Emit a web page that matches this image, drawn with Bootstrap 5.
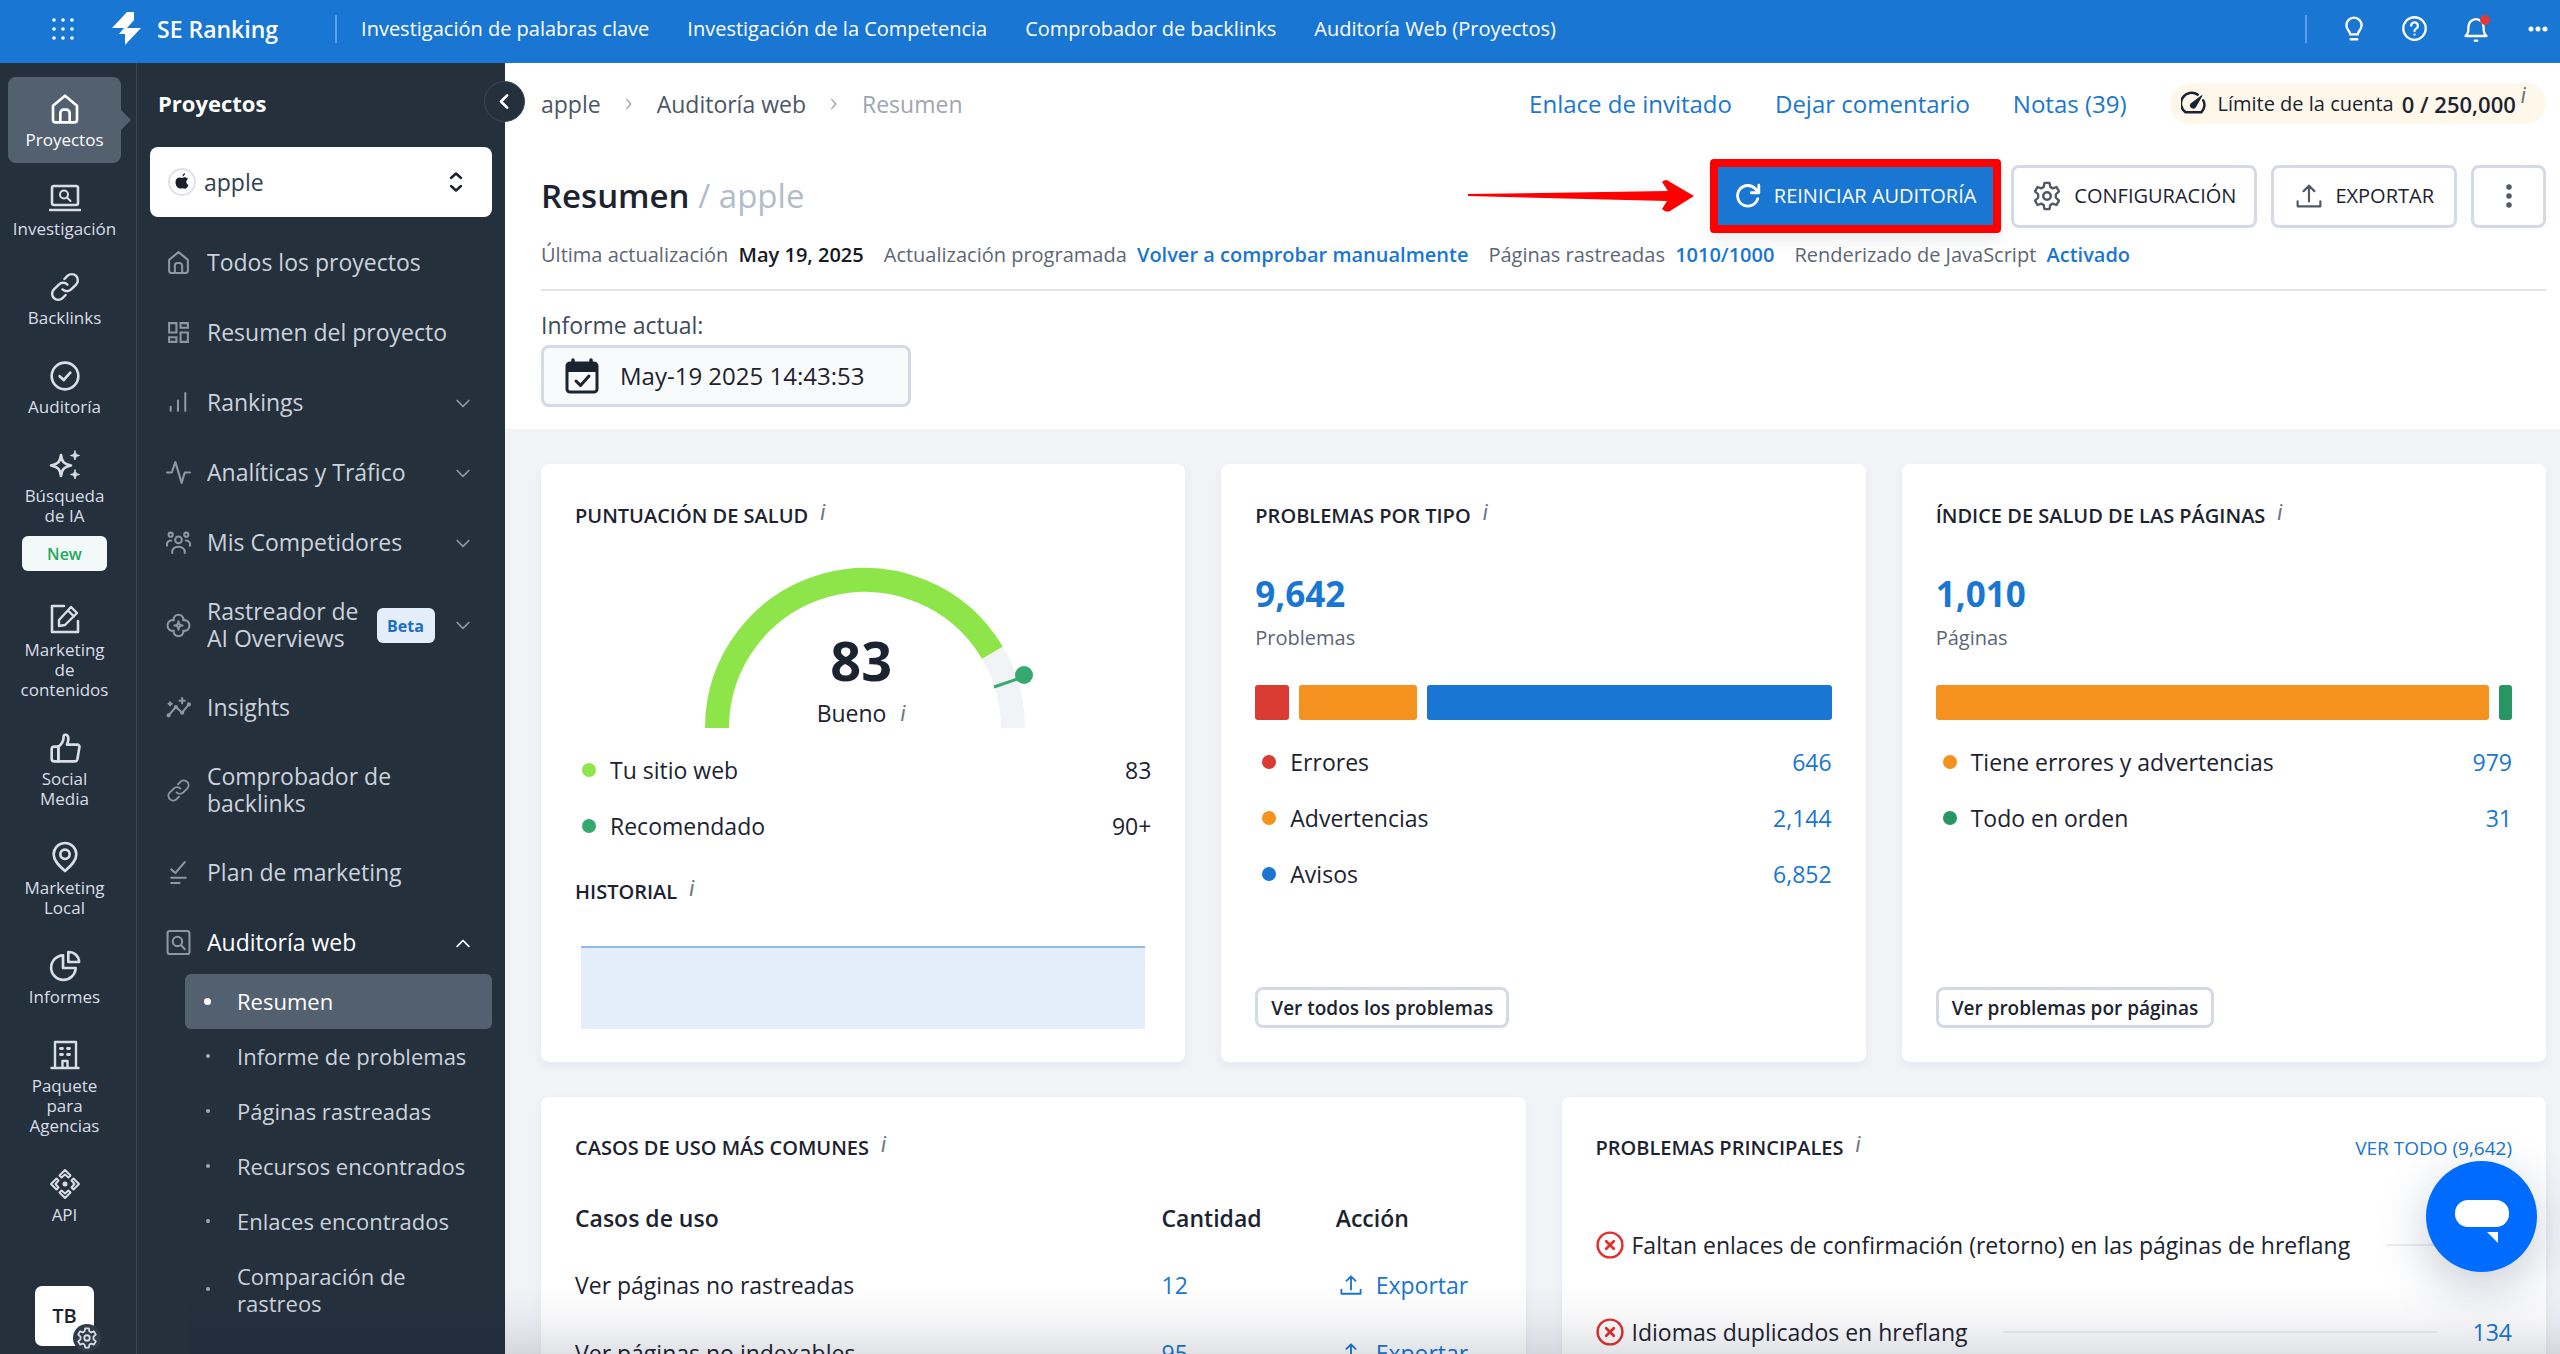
<!DOCTYPE html>
<html lang="es">
<head>
<meta charset="utf-8">
<meta name="viewport" content="width=device-width, initial-scale=1">
<title>SE Ranking – Resumen</title>
<link href="https://cdn.jsdelivr.net/npm/bootstrap@5.3.0/dist/css/bootstrap.min.css" rel="stylesheet">
<style>
:root{--blue:#1976d2;--dark:#24303c;--line:#d5d9e5;--ink:#1c2330;--grey:#5d6675}
body{font-family:"Open Sans","Noto Sans",sans-serif;font-size:23px;line-height:28px;color:var(--ink);background:#f2f3f7;height:100vh;overflow:hidden}
a{text-decoration:none;color:var(--blue)}
svg{display:block;flex:none;fill:none;stroke:currentColor;stroke-width:2;stroke-linecap:round;stroke-linejoin:round}
.topbar{height:63px;background:var(--blue);color:#fff;font-size:20px;padding-bottom:6px}
.topbar a{color:#fff}
.top-links{gap:38px}
.top-tools{gap:34px;margin-right:12px}
.apps-cell{width:112px;padding-left:14px}
.brand-name{font-size:23px;font-weight:600}
.v-sep{width:2px;height:28px;background:#5a9fe3}
.brand-sep{margin:0 24px 0 57px}
.bell-dot{right:0;top:0;width:10px;height:10px;background:#e53935;border-radius:50%}
.shell{height:calc(100vh - 63px);overflow:hidden}
.rail{width:137px;background:var(--dark);border-right:1px solid #3d4753;padding:14px 15px 0 8px}
.rail-item{color:#d9dee6;font-size:17px;font-weight:500;line-height:20px;text-align:center;padding:16px 0 13px;margin-bottom:3px;border-radius:8px}
.rail-item svg{margin:0 auto 5px}
.rail-item span{display:block;margin:0 -8px;white-space:nowrap}
.rail-item.current{background:#53606f;color:#fff}
.rail-item.current::after{content:"";position:absolute;left:100%;top:50%;margin-top:-10px;border:10px solid transparent;border-left-color:#53606f;border-right:0}
.new-tag{background:#f3f9f8;color:#1fa95c;border-radius:6px;height:35px;line-height:36px;margin:10px 14px 0;font-size:16px;font-weight:600}
.user-tile{width:59px;height:60px;background:#fff;color:var(--ink);border-radius:7px;font-size:20px;font-weight:600;line-height:60px;margin:48px 0 0 27px}
.user-gear{left:38px;top:38px;width:28px;height:28px;border-radius:50%;background:#303c49;color:#d9dee6;padding:3px}
.side{width:368px;background:var(--dark);color:#ccd2db;padding:26px 13px 0 13px}
.side-title{font-size:22px;font-weight:700;color:#fff;padding-left:8px;margin-bottom:30px}
.side-collapse{right:-20px;top:18px;width:41px;height:41px;border-radius:50%;background:var(--dark);border:1px solid #3d4753;color:#fff;z-index:3;padding:9px}
.project-select{height:70px;border:0;border-radius:8px;font-size:23px;font-weight:500;color:#333f50;padding:0 60px 0 54px;background-image:none}
.project-logo{left:18px;top:21px}
.project-arrows{right:26px;top:23px;color:#1c2330}
.menu{padding-top:11px}
.menu-item{min-height:70px;padding:20px 19px 21px 16px;line-height:27px;color:#ccd2db}
.menu-item>svg{color:#8d96a2}
.menu-item.open{color:#fff;min-height:66px;padding-bottom:17px}
.menu-item.open>svg:last-child{color:#fff}
.beta-tag{background:#e4eefb;color:#1b6ec4;border-radius:6px;width:58px;height:35px;line-height:36px;font-size:16px;font-weight:700;text-align:center;flex:none;margin-left:18px}
.sub-item{min-height:55px;margin-left:35px;padding:14px 0 14px 52px;font-size:22px;line-height:27px;color:#ccd2db;border-radius:6px;position:relative}
.sub-item::before{content:"";position:absolute;left:21px;top:50%;width:4px;height:4px;margin-top:-3px;border-radius:50%;background:#a3abb6}
.sub-item.current{background:#53606f;color:#fff}
.sub-item.current::before{left:19px;width:7px;height:7px;margin-top:-4px;background:#fff}
.head{background:#fff;padding:20px 14px 21px 36px;height:366px}
.crumbs{color:#4b5667;gap:21px}
.crumbs a{color:#4b5667}
.crumbs svg{color:#969eaa}
.crumbs span{color:#a0a5ae}
.head-links{gap:43px;font-size:24px}
.limit-pill{background:#fff8ea;border-radius:21px;height:41px;font-size:20px;padding:0 20px 0 11px}
.limit-pill b{font-size:22px;font-weight:600}
.info{font:italic 22px/20px "Roboto",sans-serif;color:#6d7685;align-self:flex-start}
.limit-pill .info{margin:3px 0 0 5px}
.panel-title .info{margin:4px 0 0 12px}
.page-title{font-size:33px;line-height:44px;font-weight:600;margin:0}
.page-title span{font-weight:400;color:#b3bcc8}
.act{border:3px solid var(--line);border-radius:8px;background:#fff;height:63px;font-size:20px;font-weight:500;color:var(--ink);display:flex;align-items:center;gap:12px;padding:0 18px;white-space:nowrap}
.act svg{color:#505967}
.act-main{background:var(--blue);border:8px solid #f00;color:#fff;border-radius:4px;height:74px;box-shadow:0 8px 14px rgba(30,40,60,.08);padding:0 17px;gap:13px}
.act-main svg{color:#fff}
.act-export{padding:0 20px 0 22px;gap:13px}
.act-more{width:75px}
.act-group{gap:14px;margin-left:10px}
.meta{font-size:20px;color:var(--grey);white-space:nowrap;gap:20px;margin-top:8px}
.meta b{font-weight:600;margin-left:5px}
.meta .when{color:#151a24}
.head-rule{height:2px;background:#dfe2e9;margin:20px 0 20px}
.date-label{color:#3f4a5a;margin-bottom:6px}
.date-btn{border:3px solid var(--line);border-radius:8px;background:#f9fafb;height:62px;width:370px;font-weight:500;font-size:24px;color:var(--ink);padding:0 0 0 20px;gap:20px;text-align:left}
.board{padding:35px 14px 0 36px;gap:36px}
.panel{background:#fff;border-radius:8px;box-shadow:0 4px 10px rgba(30,40,70,.05);padding:34px;flex:1 1 0;min-width:0}
.panel-top{height:598px;padding-top:35px}
.panel-title{font-size:20px;font-weight:600;line-height:34px;margin:0}
.dot{width:14px;height:14px;border-radius:50%;flex:none}
.legend{height:56px;padding-left:7px;gap:14px}
.big-num{font-size:35px;font-weight:700;line-height:44px;color:var(--blue);margin-top:39px}
.unit{font-size:20px;color:var(--grey);margin-top:8px}
.seg-bar{gap:10px;margin:33px 0 14px}
.seg{height:35px;border-radius:3px;flex-basis:0}
.small-btn{border:3px solid var(--line);border-radius:8px;background:#fff;height:41px;font-size:19px;font-weight:600;color:var(--ink);padding:0 13px;line-height:34px;align-self:flex-start}
.red{background:#d93a32}.orange{background:#f5911f}.bluebg{background:var(--blue)}.green{background:#289565}.lime{background:#8de549}.teal{background:#35a970}
.gauge{width:340px;height:160px;margin:35px auto 14px;overflow:visible}
.gauge svg{overflow:visible;margin-left:12px}
.gauge-text{left:11px;top:64px;width:314px}
.gauge-num{font-size:54px;line-height:56px;font-weight:700}
.gauge-word{margin-top:11px}
.gauge-word .info{margin:5px 0 0 14px}
.hist-title{margin-top:21px}
.history{height:83px;margin:37px 6px 0;background:#e4eefa;border-top:2px solid #91bbea}
.uses{margin-top:20px}
.uses td,.uses th{padding:0;height:66px;border:0;vertical-align:middle}
.uses td{height:68px}
.uses th{font-weight:600}
.uses td svg{margin:0 14px 0 4px}
.rule{height:2px;background:#eceef2;flex:1;margin:0 36px}
.issues{margin-top:36px}
.issue{height:87px}
.issue svg{color:#e0302c}
.see-all{font-size:19px;font-weight:500}
.chat{right:23px;bottom:82px;width:111px;height:111px;border-radius:50%;background:#006bff;border:0;z-index:10;box-shadow:0 16px 50px rgba(30,50,90,.25);padding:0}
.fade-edge{left:190px;right:0;bottom:0;height:70px;background:linear-gradient(rgba(25,32,60,0),rgba(25,32,60,.04) 50%,rgba(25,32,60,.13));z-index:5;pointer-events:none}
.arrow-note{width:226px;height:32px;margin-right:16px}
</style>
<script src="https://cdn.jsdelivr.net/npm/bootstrap@5.3.0/dist/js/bootstrap.bundle.min.js"></script>
</head>
<body>
<svg width="0" height="0" class="position-absolute">
<defs>
<symbol id="home" viewBox="0 0 24 24"><path d="M3 9.500 12 2l9 7.500V20a2 2 0 0 1-2 2H5a2 2 0 0 1-2-2zM8.500 22v-7a2.500 2.500 0 0 1 2.500-2.500h2a2.500 2.500 0 0 1 2.500 2.500v7"/></symbol>
<symbol id="link" viewBox="0 0 24 24"><path d="M10 14a5 5 0 0 0 7 0l4-4a4.800 4.800 0 0 0-7-7l-2.500 2.500M14 10a5 5 0 0 0-7 0l-4 4a4.800 4.800 0 0 0 7 7l2.500-2.500"/></symbol>
<symbol id="down" viewBox="0 0 24 24"><path d="m5 9 7 7 7-7"/></symbol>
<symbol id="up" viewBox="0 0 24 24"><path d="m5 16 7-7 7 7"/></symbol>
<symbol id="right" viewBox="0 0 24 24"><path d="m8 4 7 8-7 8"/></symbol>
<symbol id="gear" viewBox="0 0 24 24"><circle cx="12" cy="12" r="3"/><path d="M10 1.500h4l.6 3.200 2 1.200 3-1.100 2 3.500-2.500 2.300v2.800l2.500 2.300-2 3.500-3-1.100-2 1.200-.6 3.200h-4l-.6-3.200-2-1.200-3 1.100-2-3.500 2.500-2.300v-2.800L2.400 8.300l2-3.500 3 1.100 2-1.200z" stroke-width="1.900"/></symbol>
<symbol id="export" viewBox="0 0 24 24"><path d="M12 17V3M7 7.500 12 2.500l5 5M1.500 17v4.500h21V17"/></symbol>
<symbol id="bad" viewBox="0 0 26 26"><circle cx="13" cy="13" r="11.500" stroke-width="2.300"/><path d="m9.500 9.500 7 7m0-7-7 7" stroke-width="2.600"/></symbol>
</defs>
</svg>

<header class="topbar d-flex align-items-center">
  <div class="apps-cell d-flex justify-content-center flex-shrink-0">
    <svg width="22" height="22" viewBox="0 0 22 22"><path d="M2 2h.01M11 2h.01M20 2h.01M2 11h.01M11 11h.01M20 11h.01M2 20h.01M11 20h.01M20 20h.01" stroke-width="3.600"/></svg>
  </div>
  <svg width="29" height="33" viewBox="0 0 29 33"><path fill="#fff" stroke="none" d="M15 0h7v8l-7 8h14L13 33v-11H7l5-6H0z"/></svg>
  <a href="#" class="brand-name ms-3">SE Ranking</a>
  <div class="v-sep brand-sep"></div>
  <nav class="top-links d-flex">
    <a href="#">Investigación de palabras clave</a><a href="#">Investigación de la Competencia</a><a href="#">Comprobador de backlinks</a><a href="#">Auditoría Web (Proyectos)</a>
  </nav>
  <div class="top-tools d-flex align-items-center ms-auto">
    <div class="v-sep"></div>
    <svg width="26" height="26" viewBox="0 0 24 24" class="ms-n2"><path d="M8.500 17c0-3-3.500-4-3.500-8.500a7 7 0 0 1 14 0C19 13 15.500 14 15.500 17zM9 21.500h6" stroke-width="2.200"/></svg>
    <svg width="27" height="27" viewBox="0 0 24 24"><circle cx="12" cy="12" r="10"/><path d="M9 9.500a3 3 0 1 1 4.500 2.600c-1 .6-1.500 1.200-1.500 2.200M12 17.400h.01"/></svg>
    <div class="position-relative"><svg width="28" height="28" viewBox="0 0 24 24"><path d="M3 18h18c-2.500-2.500-2.500-4-2.500-8a6.500 6.500 0 0 0-13 0c0 4 0 5.500-2.500 8zM11 22h2"/></svg><span class="bell-dot position-absolute"></span></div>
    <svg width="20" height="6" viewBox="0 0 20 6" class="ms-1"><path d="M3 3h.01M10 3h.01M17 3h.01" stroke-width="5"/></svg>
  </div>
</header>

<div class="shell d-flex">
  <nav class="rail flex-shrink-0">
    <a href="#" class="rail-item current d-block position-relative"><svg width="32" height="32"><use href="#home"/></svg><span>Proyectos</span></a>
    <a href="#" class="rail-item d-block"><svg width="32" height="32" viewBox="0 0 32 32"><rect x="3" y="4" width="26" height="19" rx="2" stroke-width="2.600"/><path d="M1 28h30" stroke-width="2.600"/><circle cx="15" cy="12.500" r="4"/><path d="m18 15.500 3.500 3.500"/></svg><span>Investigación</span></a>
    <a href="#" class="rail-item d-block"><svg width="32" height="32" viewBox="-1 -1 26 26"><use href="#link" width="24" height="24"/></svg><span>Backlinks</span></a>
    <a href="#" class="rail-item d-block"><svg width="32" height="32" viewBox="0 0 24 24"><circle cx="12" cy="12" r="10"/><path d="m8 12.200 3 2.800 5-5.500"/></svg><span>Auditoría</span></a>
    <a href="#" class="rail-item d-block"><svg width="32" height="32" viewBox="0 0 32 32"><path d="M12 6c1 7 3 9 10 10.500C15 18 13 20 12 27c-1-7-3-9-10-10.500C9 15 11 13 12 6z" stroke-width="2.600"/><path fill="currentColor" stroke-width="1" d="M26 2c.5 3 1.500 4 4.500 4.500-3 .5-4 1.500-4.500 4.500-.5-3-1.500-4-4.500-4.500C24.500 6 25.500 5 26 2zM26 21c.5 3 1.500 4 4.500 4.500-3 .5-4 1.500-4.500 4.500-.5-3-1.500-4-4.500-4.500 3-.5 4-1.500 4.500-4.500z"/></svg><span>Búsqueda<br>de IA</span><div class="new-tag">New</div></a>
    <a href="#" class="rail-item d-block"><svg width="32" height="32" viewBox="0 0 32 32"><path d="M15 3H3v26h26V18" stroke-width="2.600"/><path d="m10 17 12-13 6 6-12 12-6 1zM19 7.500l6 6" stroke-width="2.400"/></svg><span>Marketing<br>de<br>contenidos</span></a>
    <a href="#" class="rail-item d-block"><svg width="32" height="32" viewBox="0 0 24 24"><path d="M7 11c3-2 4-5 4-8 0-1.500 3.500-1.500 3.500 2 0 2-.5 3-1 4.500H21c1.500 0 2 1 1.800 2l-1.500 9c-.2 1-1 1.500-2 1.500H4a2 2 0 0 1-2-2v-7a2 2 0 0 1 2-2h3zv11"/><path d="M7 11v11"/></svg><span>Social<br>Media</span></a>
    <a href="#" class="rail-item d-block"><svg width="32" height="32" viewBox="0 0 24 24"><path d="M12 22.500C7 18 3.500 14.500 3.500 10a8.500 8.500 0 0 1 17 0c0 4.500-3.500 8-8.500 12.500z"/><circle cx="12" cy="10" r="3.500"/></svg><span>Marketing<br>Local</span></a>
    <a href="#" class="rail-item d-block"><svg width="32" height="32" viewBox="0 0 24 24"><path d="M10.500 4A9.200 9.200 0 1 0 20 13.500h-9.500zM14.500 1.500c4.500 0 8 3 8 7.500h-8z"/></svg><span>Informes</span></a>
    <a href="#" class="rail-item d-block"><svg width="32" height="32" viewBox="0 0 32 32"><path d="M6 29V3h21v26M2.500 29h27M13.500 29v-7h5v7" stroke-width="2.400"/><path d="M11.500 9.500h2M18.500 9.500h2M11.500 15.500h2M18.500 15.500h2" stroke-width="2.800"/></svg><span>Paquete<br>para<br>Agencias</span></a>
    <a href="#" class="rail-item d-block"><svg width="32" height="32" viewBox="0 0 32 32"><path d="m16 2 5.500 5.500-2 2L16 6.500l-3.500 3-2-2zM16 30l-5.500-5.500 2-2 3.500 3 3.500-3 2 2zM2 16l5.500-5.500 2 2-3 3.500 3 3.500-2 2zM30 16l-5.500 5.500-2-2 3-3.500-3-3.500 2-2z"/><circle cx="16" cy="16" r="1.500" fill="currentColor"/></svg><span>API</span></a>
    <div class="user-tile position-relative text-center">TB<div class="user-gear position-absolute"><svg width="22" height="22"><use href="#gear"/></svg></div></div>
  </nav>

  <aside class="side flex-shrink-0 position-relative">
    <button class="side-collapse position-absolute" aria-label="Contraer"><svg width="21" height="21" viewBox="0 0 24 24"><path d="m15 5-7 7 7 7" stroke-width="3"/></svg></button>
    <div class="side-title">Proyectos</div>
    <div class="position-relative">
      <select class="form-select project-select" aria-label="Proyecto"><option>apple</option></select>
      <svg class="project-logo position-absolute" width="28" height="28" viewBox="0 0 28 28"><circle cx="14" cy="14" r="13" stroke="#dfe2ea"/><path fill="#1c1f28" stroke="none" d="M14.500 8.500c0-2 1-3 2.500-3.500 0 2-1 3-2.500 3.500zM7.500 14c0-4 3.500-5.500 6.500-4 2.500-1.300 4.500-.8 6 1-2.500 1.500-2 5 .5 6-1 3-3 4.500-6 3.200-4 1.500-7-1.700-7-6.200z"/></svg>
      <svg class="project-arrows position-absolute" width="20" height="24" viewBox="0 0 20 24"><path d="m5 8 5-4.500L15 8M5 16l5 4.500 5-4.500" stroke-width="2.400"/></svg>
    </div>
    <nav class="menu">
      <a href="#" class="menu-item d-flex align-items-center"><svg width="25" height="25" class="me-3"><use href="#home"/></svg>Todos los proyectos</a>
      <a href="#" class="menu-item d-flex align-items-center"><svg width="25" height="25" class="me-3" viewBox="0 0 24 24"><path d="M3 3h7v9H3zM14 3h7v4.500h-7zM14 12h7v9h-7zM3 16.500h7V21H3z" stroke-linejoin="miter"/></svg>Resumen del proyecto</a>
      <a href="#" class="menu-item d-flex align-items-center"><svg width="25" height="25" class="me-3" viewBox="0 0 24 24"><path d="M4.500 20v-4M11.500 20V10M18.500 20V3"/></svg>Rankings<svg width="20" height="20" class="ms-auto"><use href="#down"/></svg></a>
      <a href="#" class="menu-item d-flex align-items-center"><svg width="25" height="25" class="me-3" viewBox="0 0 24 24"><path d="M1 12h4.500L9 2l6 20 3-10h5"/></svg>Analíticas y Tráfico<svg width="20" height="20" class="ms-auto"><use href="#down"/></svg></a>
      <a href="#" class="menu-item d-flex align-items-center"><svg width="25" height="25" class="me-3" viewBox="0 0 24 24"><circle cx="12" cy="9.500" r="3.200"/><circle cx="4.500" cy="4.500" r="2"/><circle cx="19.500" cy="4.500" r="2"/><path d="M6 22c-1-8 13-8 12 0M1 15c-.5-3 1-5 4-5M23 15c.5-3-1-5-4-5"/></svg>Mis Competidores<svg width="20" height="20" class="ms-auto"><use href="#down"/></svg></a>
      <a href="#" class="menu-item d-flex align-items-center"><svg width="25" height="25" class="me-3" viewBox="0 0 24 24"><path d="M7.500 7C6-0 18-0 16.500 7c8-1.500 8 11.500 0 10 1.500 7-10.500 7-9 0-8 1.500-8-11.500 0-10zM12 8c.5 3 1 3.500 4 4-3 .5-3.500 1-4 4-.5-3-1-3.500-4-4 3-.5 3.500-1 4-4z"/></svg><span>Rastreador de<br>AI Overviews</span><span class="beta-tag">Beta</span><svg width="20" height="20" class="ms-auto"><use href="#down"/></svg></a>
      <a href="#" class="menu-item d-flex align-items-center"><svg width="25" height="25" class="me-3" viewBox="0 0 24 24"><path d="m2.500 19.500 7-8 6 5.500L22 9M4 7v3M2.500 8.500h3M15.500 3v5M13 5.500h5"/><path d="M2.500 19.500h.01M9.500 11.500h.01M15.500 17h.01M22 9h.01" stroke-width="4"/></svg>Insights</a>
      <a href="#" class="menu-item d-flex align-items-center"><svg width="25" height="25" class="me-3" viewBox="-1 -1 26 26"><use href="#link" width="24" height="24"/></svg><span>Comprobador de<br>backlinks</span></a>
      <a href="#" class="menu-item d-flex align-items-center"><svg width="25" height="25" class="me-3" viewBox="0 0 24 24"><path d="m5 9 4 3.500L18 2M5 17h14M5 22h8"/></svg>Plan de marketing</a>
      <a href="#" class="menu-item open d-flex align-items-center"><svg width="25" height="25" class="me-3" viewBox="0 0 24 24"><rect x="1.500" y="1" width="21" height="22" rx="2"/><circle cx="11" cy="11" r="4.500"/><path d="m14.500 14.500 3.500 4"/></svg>Auditoría web<svg width="20" height="20" class="ms-auto"><use href="#up"/></svg></a>
      <a href="#" class="sub-item current d-block">Resumen</a>
      <a href="#" class="sub-item d-block">Informe de problemas</a>
      <a href="#" class="sub-item d-block">Páginas rastreadas</a>
      <a href="#" class="sub-item d-block">Recursos encontrados</a>
      <a href="#" class="sub-item d-block">Enlaces encontrados</a>
      <a href="#" class="sub-item d-block">Comparación de<br>rastreos</a>
    </nav>
  </aside>

  <main class="flex-grow-1">
    <section class="head">
      <div class="d-flex align-items-center">
        <nav class="crumbs d-flex align-items-center">
          <a href="#">apple</a><svg width="14" height="14"><use href="#right"/></svg><a href="#">Auditoría web</a><svg width="14" height="14"><use href="#right"/></svg><span>Resumen</span>
        </nav>
        <div class="head-links d-flex align-items-center ms-auto">
          <a href="#">Enlace de invitado</a><a href="#">Dejar comentario</a><a href="#">Notas (39)</a>
          <div class="limit-pill d-flex align-items-center"><svg width="25" height="25" viewBox="0 0 24 24" class="me-2"><path d="M16 3.500A10 10 0 0 0 4.500 20.500h15c3-3 4-8 1.800-11.500" stroke-width="2.400"/><path d="M20 4.500 14 15a2.500 2.500 0 0 1-4.500-2.500z" fill="currentColor" stroke-width="1"/></svg><span class="ms-1">Límite de la cuenta</span><b class="ms-2">0 / 250,000</b><i class="info">i</i></div>
        </div>
      </div>
      <div class="d-flex align-items-center" style="margin-top:35px">
        <h1 class="page-title">Resumen <span>/ apple</span></h1>
        <svg class="arrow-note ms-auto" viewBox="0 0 226 32" preserveAspectRatio="none"><path fill="#f00" stroke="none" d="M0 14 200 11l-6-9q4-4 8 0l24 14-24 15q-4 2-8-2l5-8L0 16z"/></svg>
        <button class="act act-main"><svg width="26" height="26" viewBox="0 0 24 24"><path d="M21 14.500A9.500 9.500 0 1 1 19 5.500l2.500 3M22 2v7h-7" stroke-width="2.600"/></svg>REINICIAR AUDITORÍA</button>
        <div class="act-group d-flex">
          <button class="act"><svg width="30" height="30"><use href="#gear"/></svg>CONFIGURACIÓN</button>
          <button class="act act-export"><svg width="26" height="26"><use href="#export"/></svg>EXPORTAR</button>
          <button class="act act-more justify-content-center" aria-label="Más"><svg width="6" height="24" viewBox="0 0 6 24"><path d="M3 3h.01M3 12h.01M3 21h.01" stroke-width="5.500"/></svg></button>
        </div>
      </div>
      <div class="meta d-flex">
        <span>Última actualización <b class="when">May 19, 2025</b></span><span>Actualización programada <a href="#"><b>Volver a comprobar manualmente</b></a></span><span>Páginas rastreadas <a href="#"><b>1010/1000</b></a></span><span>Renderizado de JavaScript <a href="#"><b>Activado</b></a></span>
      </div>
      <div class="head-rule"></div>
      <label for="fecha" class="date-label d-block">Informe actual:</label>
      <button id="fecha" class="date-btn d-flex align-items-center"><svg width="36" height="38" viewBox="0 0 36 38"><rect x="3" y="6" width="30" height="29" rx="3" stroke-width="3"/><path d="M3 11h30" stroke-width="8" stroke-linecap="butt"/><path d="M9 3v6M27 3v6" stroke-width="3.500"/><path d="m12 24 4.500 4.500L25 19" stroke-width="3"/></svg>May-19 2025 14:43:53</button>
    </section>

    <div class="board d-flex">
      <section class="panel panel-top">
        <h2 class="panel-title d-flex">PUNTUACIÓN DE SALUD<i class="info">i</i></h2>
        <div class="gauge position-relative">
          <svg width="320" height="160" viewBox="0 0 320 160">
            <g stroke-linecap="butt"><path d="M12 160A148 148 0 0 1 308 160" stroke="#f2f3f7" stroke-width="24"/>
            <path d="M12 160A148 148 0 0 1 287.400 84.700" stroke="#8de549" stroke-width="24"/>
            <path d="M289 119 318 109" stroke="#35a970" stroke-width="3"/></g><circle cx="319" cy="107" r="9" fill="#35a970" stroke="none"/>
          </svg>
          <div class="gauge-text position-absolute text-center"><div class="gauge-num">83</div><div class="gauge-word d-flex justify-content-center">Bueno<i class="info">i</i></div></div>
        </div>
        <div class="legend d-flex align-items-center"><span class="dot lime"></span>Tu sitio web<span class="ms-auto">83</span></div>
        <div class="legend d-flex align-items-center"><span class="dot teal"></span>Recomendado<span class="ms-auto">90+</span></div>
        <h2 class="panel-title hist-title d-flex">HISTORIAL<i class="info">i</i></h2>
        <div class="history"></div>
      </section>

      <section class="panel panel-top d-flex flex-column">
        <h2 class="panel-title d-flex">PROBLEMAS POR TIPO<i class="info">i</i></h2>
        <a href="#" class="big-num">9,642</a>
        <div class="unit">Problemas</div>
        <div class="seg-bar d-flex"><div class="seg red" style="flex-grow:34"></div><div class="seg orange" style="flex-grow:118"></div><div class="seg bluebg" style="flex-grow:404"></div></div>
        <div class="legend d-flex align-items-center"><span class="dot red"></span>Errores<a href="#" class="ms-auto">646</a></div>
        <div class="legend d-flex align-items-center"><span class="dot orange"></span>Advertencias<a href="#" class="ms-auto">2,144</a></div>
        <div class="legend d-flex align-items-center"><span class="dot bluebg"></span>Avisos<a href="#" class="ms-auto">6,852</a></div>
        <button class="small-btn mt-auto">Ver todos los problemas</button>
      </section>

      <section class="panel panel-top d-flex flex-column">
        <h2 class="panel-title d-flex">ÍNDICE DE SALUD DE LAS PÁGINAS<i class="info">i</i></h2>
        <a href="#" class="big-num">1,010</a>
        <div class="unit">Páginas</div>
        <div class="seg-bar d-flex"><div class="seg orange" style="flex-grow:552"></div><div class="seg green" style="flex-grow:13"></div></div>
        <div class="legend d-flex align-items-center"><span class="dot orange"></span>Tiene errores y advertencias<a href="#" class="ms-auto">979</a></div>
        <div class="legend d-flex align-items-center"><span class="dot green"></span>Todo en orden<a href="#" class="ms-auto">31</a></div>
        <button class="small-btn mt-auto">Ver problemas por páginas</button>
      </section>
    </div>

    <div class="board d-flex">
      <section class="panel">
        <h2 class="panel-title d-flex">CASOS DE USO MÁS COMUNES<i class="info">i</i></h2>
        <table class="uses w-100">
          <colgroup><col style="width:64%"><col style="width:19%"><col></colgroup>
          <thead><tr><th>Casos de uso</th><th>Cantidad</th><th>Acción</th></tr></thead>
          <tbody>
          <tr><td>Ver páginas no rastreadas</td><td><a href="#">12</a></td><td><a href="#" class="d-flex align-items-center"><svg width="22" height="22"><use href="#export"/></svg>Exportar</a></td></tr>
          <tr><td>Ver páginas no indexables</td><td><a href="#">95</a></td><td><a href="#" class="d-flex align-items-center"><svg width="22" height="22"><use href="#export"/></svg>Exportar</a></td></tr>
          </tbody>
        </table>
      </section>
      <section class="panel">
        <div class="d-flex align-items-center"><h2 class="panel-title d-flex">PROBLEMAS PRINCIPALES<i class="info">i</i></h2><a href="#" class="see-all ms-auto">VER TODO (9,642)</a></div>
        <div class="issues">
          <div class="issue d-flex align-items-center"><svg width="28" height="28" class="me-2"><use href="#bad"/></svg>Faltan enlaces de confirmación (retorno) en las páginas de hreflang<div class="rule"></div><a href="#">134</a></div>
          <div class="issue d-flex align-items-center"><svg width="28" height="28" class="me-2"><use href="#bad"/></svg>Idiomas duplicados en hreflang<div class="rule"></div><a href="#">134</a></div>
        </div>
      </section>
    </div>
  </main>
</div>
<div class="fade-edge position-fixed"></div>
<button class="chat position-fixed" aria-label="Chat"><svg width="111" height="111" viewBox="0 0 111 111"><g fill="#fff" stroke="none"><rect x="29" y="39" width="54" height="27" rx="13"/><path d="M61 71h11v11z"/></g></svg></button>
</body>
</html>
